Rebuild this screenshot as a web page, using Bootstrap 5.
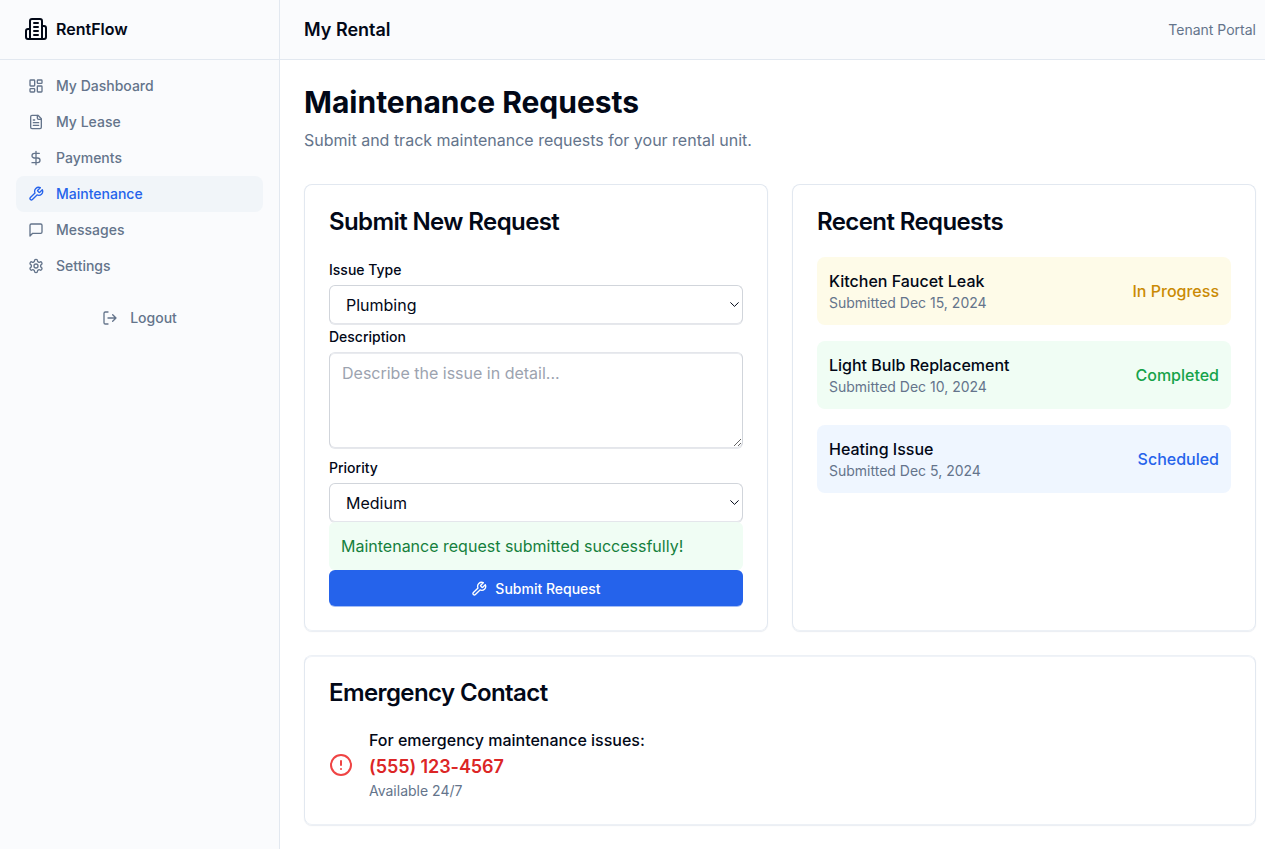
<!DOCTYPE html>
<html lang="en">
<head>
<meta charset="utf-8">
<meta name="viewport" content="width=device-width, initial-scale=1">
<title>RentFlow – Maintenance Requests</title>
<link rel="stylesheet" href="https://cdn.jsdelivr.net/npm/bootstrap@5.3.0/dist/css/bootstrap.min.css">
<style>
:root{--ink:#020817;--muted:#64748b;--line:#e2e8f0;--blue:#2563eb}
body{font-family:Inter,"Liberation Sans",sans-serif;font-size:16px;line-height:24px;color:var(--ink);background:#fff;height:100vh;overflow:hidden}
h1,h2,p{margin:0}
svg{flex:none;fill:none;stroke:currentColor;stroke-width:2;stroke-linecap:round;stroke-linejoin:round}
.ico{width:16px;height:16px}
.ico-lg{width:24px;height:24px}
.side{width:280px;flex:none;background:#fafbfd;border-right:1px solid var(--line)}
.bar{height:60px;border-bottom:1px solid var(--line);padding:0 24px;background:#fafbfd}
.topbar{padding-right:9px}
.brand{font-weight:600;gap:8px;padding-bottom:1px}
.side .nav-link{height:36px;padding:0 12px;gap:12px;font-size:14px;line-height:20px;font-weight:500;color:var(--muted);border-radius:8px}
.side .nav-link.active{background:#f1f5f9;color:var(--blue)}
.bar-title{font-size:18px;line-height:28px;font-weight:600}
.small-text{font-size:14px;line-height:20px;color:var(--muted)}
.lede{color:var(--muted)}
.content-area{padding:24px 9px 24px 24px}
.page-title{font-size:30px;line-height:36px;font-weight:700;margin-bottom:8px}
.panels{display:grid;grid-template-columns:1fr 1fr;gap:24px;margin-top:32px}
.panel{border:1px solid var(--line);border-bottom-color:#edf1f6;border-radius:8px;padding:24px;box-shadow:0 1px 0 #eceff4,0 1px 2px rgba(0,0,0,.04)}
.panel-wide{border-top-color:#edf1f6;box-shadow:inset 0 1px 0 #f0f3f8,0 1px 0 #eceff4,0 1px 2px rgba(0,0,0,.04)}
.panel h2{font-size:24px;line-height:24px;font-weight:600;letter-spacing:-.6px;padding-top:1px;margin-bottom:23px}
.form-label{display:block;font-size:14px;line-height:24px;font-weight:500;margin:0 0 4px;padding-top:1px;height:24px}
.field,.field:focus{display:block;width:100%;border:1px solid #d1d5db;border-bottom-color:#e4e6eb;border-radius:6px;font-size:16px;color:var(--ink);background-color:#fff;box-shadow:0 1px 0 #e6e8ec;outline:0}
select.field{appearance:none;height:39.4px;padding:7px 16px 9px;background-repeat:no-repeat;background-position:right 3px top 16px;background-image:url("data:image/svg+xml,%3Csvg xmlns='http://www.w3.org/2000/svg' width='9' height='5'%3E%3Cpath d='M.4.4 4.5 4.4 8.6.4' fill='none' stroke='%23020817'/%3E%3C/svg%3E")}
textarea.field{height:96px;padding:8px 12px;line-height:24px;margin-bottom:6.6px;resize:vertical;border-top-color:#e4e6eb;box-shadow:inset 0 1px 0 #e9ebef,0 1px 0 #e6e8ec}
.field::placeholder{color:#9ca3af;opacity:1}
.notice{background:#f0fdf4;color:#15803d;padding:12px;border-radius:6px}
.btn-submit{height:36px;padding:1px 0 0;gap:8px;font-size:14px;line-height:20px;font-weight:500;border:0;border-radius:6px;background:var(--blue);color:#fff;box-shadow:0 1px 0 #a4bdf5}
.req{padding:12px;border-radius:8px;font-weight:500}
.req .small-text{font-weight:400}
.req-yellow{background:#fefbe8}.req-green{background:#f0fdf4}.req-blue{background:#eff6ff}
.st-yellow{color:#ca8a04}.st-green{color:#16a34a}.st-blue{color:var(--blue)}
.call-note{font-weight:500}
.phone{font-size:18px;line-height:28px;font-weight:600;letter-spacing:-.07px;color:#dc2626;margin-top:.3px}
.avail{margin-bottom:-.3px}
.alert-ico{color:#ef4444;margin-top:1px}
</style>
</head>
<body class="d-flex">
<aside class="side d-flex flex-column">
  <div class="bar brand d-flex align-items-center">
    <svg class="ico-lg" viewBox="0 0 24 24"><path d="M6 22V4a2 2 0 0 1 2-2h8a2 2 0 0 1 2 2v18Z"/><path d="M6 12H4a2 2 0 0 0-2 2v6a2 2 0 0 0 2 2h2"/><path d="M18 9h2a2 2 0 0 1 2 2v9a2 2 0 0 1-2 2h-2"/><path d="M10 6h4M10 10h4M10 14h4M10 18h4"/></svg>
    <span>RentFlow</span>
  </div>
  <nav class="nav flex-column flex-nowrap px-3 pt-2">
    <a class="nav-link d-flex align-items-center" href="#"><svg class="ico" viewBox="0 0 24 24"><rect width="7" height="9" x="3" y="3" rx="1"/><rect width="7" height="5" x="14" y="3" rx="1"/><rect width="7" height="9" x="14" y="12" rx="1"/><rect width="7" height="5" x="3" y="16" rx="1"/></svg>My Dashboard</a>
    <a class="nav-link d-flex align-items-center" href="#"><svg class="ico" viewBox="0 0 24 24"><path d="M15 2H6a2 2 0 0 0-2 2v16a2 2 0 0 0 2 2h12a2 2 0 0 0 2-2V7Z"/><path d="M14 2v4a2 2 0 0 0 2 2h4M10 9H8M16 13H8M16 17H8"/></svg>My Lease</a>
    <a class="nav-link d-flex align-items-center" href="#"><svg class="ico" viewBox="0 0 24 24"><path d="M12 2v20M17 5H9.5a3.5 3.5 0 0 0 0 7h5a3.5 3.5 0 0 1 0 7H6"/></svg>Payments</a>
    <a class="nav-link active d-flex align-items-center" href="#"><svg class="ico" viewBox="0 0 24 24"><path d="M14.7 6.3a1 1 0 0 0 0 1.4l1.6 1.6a1 1 0 0 0 1.4 0l3.77-3.77a6 6 0 0 1-7.94 7.94l-6.91 6.91a2.12 2.12 0 0 1-3-3l6.91-6.91a6 6 0 0 1 7.94-7.94l-3.76 3.76z"/></svg>Maintenance</a>
    <a class="nav-link d-flex align-items-center" href="#"><svg class="ico" viewBox="0 0 24 24"><path d="M21 15a2 2 0 0 1-2 2H7l-4 4V5a2 2 0 0 1 2-2h14a2 2 0 0 1 2 2z"/></svg>Messages</a>
    <a class="nav-link d-flex align-items-center" href="#"><svg class="ico" viewBox="0 0 24 24"><path d="M12.22 2h-.44a2 2 0 0 0-2 2v.18a2 2 0 0 1-1 1.73l-.43.25a2 2 0 0 1-2 0l-.15-.08a2 2 0 0 0-2.73.73l-.22.38a2 2 0 0 0 .73 2.73l.15.1a2 2 0 0 1 1 1.72v.51a2 2 0 0 1-1 1.74l-.15.09a2 2 0 0 0-.73 2.73l.22.38a2 2 0 0 0 2.73.73l.15-.08a2 2 0 0 1 2 0l.43.25a2 2 0 0 1 1 1.73V20a2 2 0 0 0 2 2h.44a2 2 0 0 0 2-2v-.18a2 2 0 0 1 1-1.73l.43-.25a2 2 0 0 1 2 0l.15.08a2 2 0 0 0 2.73-.73l.22-.39a2 2 0 0 0-.73-2.73l-.15-.08a2 2 0 0 1-1-1.74v-.5a2 2 0 0 1 1-1.74l.15-.09a2 2 0 0 0 .73-2.73l-.22-.38a2 2 0 0 0-2.73-.73l-.15.08a2 2 0 0 1-2 0l-.43-.25a2 2 0 0 1-1-1.73V4a2 2 0 0 0-2-2z"/><circle cx="12" cy="12" r="3"/></svg>Settings</a>
    <a class="nav-link d-flex align-items-center justify-content-center mt-3" href="#"><svg class="ico" viewBox="0 0 24 24"><path d="M9 21H5a2 2 0 0 1-2-2V5a2 2 0 0 1 2-2h4M16 17l5-5-5-5M21 12H9"/></svg>Logout</a>
  </nav>
</aside>
<div class="flex-grow-1">
  <header class="bar topbar d-flex align-items-center justify-content-between">
    <span class="bar-title">My Rental</span>
    <span class="small-text">Tenant Portal</span>
  </header>
  <main class="content-area">
    <h1 class="page-title">Maintenance Requests</h1>
    <p class="lede">Submit and track maintenance requests for your rental unit.</p>
    <div class="panels">
      <section class="panel">
        <h2>Submit New Request</h2>
        <form>
          <label class="form-label" for="type">Issue Type</label>
          <select class="field" id="type"><option>Plumbing</option><option>Electrical</option></select>
          <label class="form-label" for="desc">Description</label>
          <textarea class="field" id="desc" placeholder="Describe the issue in detail..."></textarea>
          <label class="form-label" for="prio">Priority</label>
          <select class="field" id="prio"><option>Medium</option><option>High</option></select>
          <div class="notice">Maintenance request submitted successfully!</div>
          <button type="button" class="btn btn-submit w-100 d-flex align-items-center justify-content-center"><svg class="ico" viewBox="0 0 24 24"><path d="M14.7 6.3a1 1 0 0 0 0 1.4l1.6 1.6a1 1 0 0 0 1.4 0l3.77-3.77a6 6 0 0 1-7.94 7.94l-6.91 6.91a2.12 2.12 0 0 1-3-3l6.91-6.91a6 6 0 0 1 7.94-7.94l-3.76 3.76z"/></svg>Submit Request</button>
        </form>
      </section>
      <section class="panel">
        <h2>Recent Requests</h2>
        <div class="d-flex flex-column gap-3">
          <div class="req req-yellow d-flex align-items-center justify-content-between"><div><p>Kitchen Faucet Leak</p><p class="small-text">Submitted Dec 15, 2024</p></div><span class="st-yellow">In Progress</span></div>
          <div class="req req-green d-flex align-items-center justify-content-between"><div><p>Light Bulb Replacement</p><p class="small-text">Submitted Dec 10, 2024</p></div><span class="st-green">Completed</span></div>
          <div class="req req-blue d-flex align-items-center justify-content-between"><div><p>Heating Issue</p><p class="small-text">Submitted Dec 5, 2024</p></div><span class="st-blue">Scheduled</span></div>
        </div>
      </section>
    </div>
    <section class="panel panel-wide mt-4">
      <h2>Emergency Contact</h2>
      <div class="d-flex align-items-center gap-3">
        <svg class="ico-lg alert-ico" viewBox="0 0 24 24"><circle cx="12" cy="12" r="10"/><path d="M12 8v4M12 16h.01"/></svg>
        <div><p class="call-note">For emergency maintenance issues:</p><p class="phone">(555) 123-4567</p><p class="small-text avail">Available 24/7</p></div>
      </div>
    </section>
  </main>
</div>
<script src="https://cdn.jsdelivr.net/npm/bootstrap@5.3.0/dist/js/bootstrap.bundle.min.js"></script>
</body>
</html>
